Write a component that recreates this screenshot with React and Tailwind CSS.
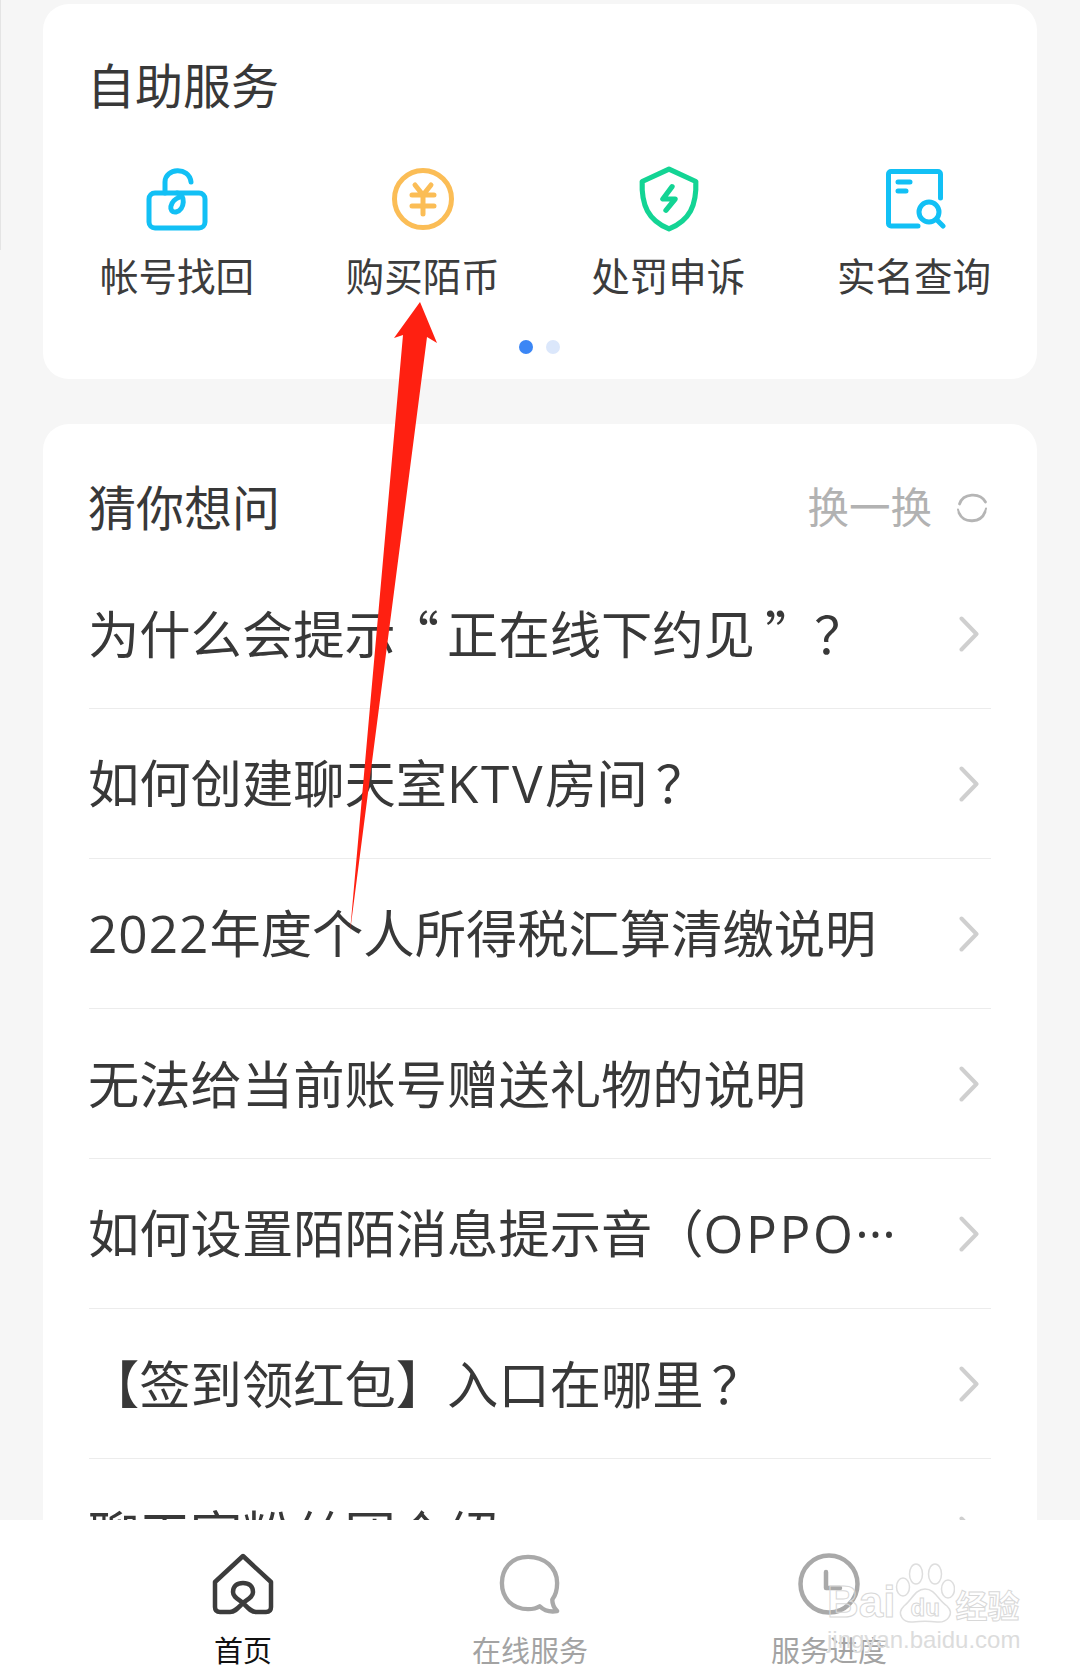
import React from 'react';

const font = { fontFamily: '"Noto Sans CJK SC", sans-serif' };

function LockIcon() {
  return (
    <svg viewBox="0 0 62 64" className="w-[62px] h-[64px]" fill="none" stroke="#12c0f5" strokeWidth="5" strokeLinecap="round" strokeLinejoin="round">
      <rect x="3" y="26" width="56" height="35" rx="6" />
      <path d="M19 26 V15 C19 1 43 -1 45 15" />
      <path d="M31 26 C40 27 39 43 30 45 C22 46 23 34 34 30" />
    </svg>
  );
}

function CoinIcon() {
  return (
    <svg viewBox="0 0 64 64" className="w-[64px] h-[64px]" fill="none" stroke="#fbbd56" strokeLinecap="round">
      <circle cx="32" cy="32" r="28.5" strokeWidth="5" />
      <path d="M24 18 L32 28 L40 18 M21 28 H43 M21 39 H43 M32 28 V47" strokeWidth="5" />
    </svg>
  );
}

function ShieldIcon() {
  return (
    <svg viewBox="0 0 60 64" className="w-[62px] h-[66px] ml-[1px]" fill="none" stroke="#13d494" strokeLinecap="round" strokeLinejoin="round">
      <path d="M30 3 L56 15 C57 38 50 53 30 61 C10 53 3 38 4 15 Z" strokeWidth="5" />
      <path d="M33 20 L24 32 H36 L27 43" strokeWidth="5" />
    </svg>
  );
}

function SearchDocIcon() {
  return (
    <svg viewBox="0 0 60 60" className="w-[60px] h-[60px] ml-[4px]" fill="none" stroke="#12c0f5" strokeLinecap="round" strokeLinejoin="round">
      <path d="M32 57 H5 A2.500 2.500 0 0 1 2.500 54.500 V5 A2.500 2.500 0 0 1 5 2.500 H52 A2.500 2.500 0 0 1 54.500 5 V29" strokeWidth="5" />
      <path d="M12 13 H24 M12 22 H20" strokeWidth="5" />
      <circle cx="43" cy="43" r="10" strokeWidth="5" />
      <path d="M51 51 L57 57" strokeWidth="5" />
    </svg>
  );
}

function Chevron() {
  return (
    <svg viewBox="0 0 20 36" className="w-[20px] h-[36px] shrink-0" fill="none" stroke="#cfcfcf" strokeWidth="4" strokeLinecap="round" strokeLinejoin="round">
      <path d="M2.500 2.500 L17.500 18 L2.500 33.500" />
    </svg>
  );
}

function RefreshIcon() {
  return (
    <svg viewBox="0 0 32 32" className="w-[32px] h-[32px] mt-[6px]" fill="none" stroke="#b5b5b5" strokeWidth="2.800" strokeLinecap="round">
      <path d="M3.500 12 C7 1 24 0 29.500 10" />
      <path d="M29 20 C25 31 8 32 3 21" />
      <path d="M3 21 L2 17.500" strokeWidth="2" />
      <path d="M29 20 L30 16.500" strokeWidth="2" />
    </svg>
  );
}

function HomeIcon() {
  return (
    <svg viewBox="0 0 64 62" className="w-[64px] h-[62px]" fill="none" stroke="#3c3c3c" strokeWidth="4.500" strokeLinejoin="round" strokeLinecap="round">
      <path d="M32 3 L60 29 V54 C60 58 58 59 55 59 H45 C40 59 37 55 32 50 C27 46 22 44 22 39 C22 33 26 30 32 30 C38 30 42 33 42 39 C42 44 37 46 32 50 C27 55 24 59 19 59 H9 C6 59 4 58 4 54 V29 Z" />
    </svg>
  );
}

function ChatIcon() {
  return (
    <svg viewBox="0 0 64 62" className="w-[62px] h-[62px]" fill="none" stroke="#a9a9a9" strokeWidth="4.500" strokeLinejoin="round" strokeLinecap="round">
      <path d="M30 3 C12 3 3 16 3 30 C3 46 14 57 30 57 C35 57 39 56 42 54 C47 59 54 60 60 59 C56 55 55 51 55 47 C59 42 60 36 60 30 C60 14 47 3 30 3 Z" />
    </svg>
  );
}

function ClockIcon() {
  return (
    <svg viewBox="0 0 62 62" className="w-[62px] h-[62px]" fill="none" stroke="#a9a9a9" strokeWidth="4.500" strokeLinecap="round" strokeLinejoin="round">
      <circle cx="31" cy="31" r="28.500" />
      <path d="M28 19 V35 H42" />
    </svg>
  );
}

function PawIcon() {
  return (
    <svg viewBox="0 0 60 62" className="w-[60px] h-[62px]" fill="#ffffff" stroke="#dedede" strokeWidth="1.500">
      <ellipse cx="21" cy="12" rx="6.500" ry="10" />
      <ellipse cx="40" cy="12" rx="6.500" ry="10" />
      <ellipse cx="8" cy="25" rx="6.500" ry="9" />
      <ellipse cx="53" cy="27" rx="6.500" ry="9" />
      <path d="M30 27 C40 27 43 38 52 44 C60 52 52 61 42 60 C35 59 25 59 18 60 C8 61 1 52 9 44 C17 38 20 27 30 27 Z" />
    </svg>
  );
}

const Latin = ({ children }) => <span className="[font-family:'Open_Sans',sans-serif] tracking-[0.05em]">{children}</span>;
const Mark = () => <span className="ml-[8px]">？</span>;

const services = [
  { label: '帐号找回', icon: <LockIcon /> },
  { label: '购买陌币', icon: <CoinIcon /> },
  { label: '处罚申诉', icon: <ShieldIcon /> },
  { label: '实名查询', icon: <SearchDocIcon /> },
];

const questions = [
  <>为什么会提示<span className="-ml-[8px] mr-[8px]">“</span>正在线下约见<span className="ml-[10px] -mr-[10px]">”</span><Mark /></>,
  <>如何创建聊天室<Latin>KTV</Latin>房间<Mark /></>,
  <><span className="[font-family:'Open_Sans',sans-serif] tracking-[0.02em]">2022</span>年度个人所得税汇算清缴说明</>,
  <>无法给当前账号赠送礼物的说明</>,
  <>如何设置陌陌消息提示音（<Latin>OPPO</Latin><span className="[font-family:'Open_Sans',sans-serif]">···</span></>,
  <>【签到领红包】入口在哪里<Mark /></>,
  <>聊天室粉丝团介绍</>,
];

export default function App() {
  return (
    <div lang="zh-CN" className="relative w-[1080px] h-[1677px] flex flex-col overflow-hidden bg-[#f6f6f6]" style={font}>
      <div className="flex-1 min-h-0 overflow-hidden px-[43px] pt-[4px]">
        {/* self service */}
        <section className="h-[375px] bg-white rounded-[26px] pt-[42px]">
          <h2 className="pl-[44px] text-[48px] leading-[74px] text-[#383838]">自助服务</h2>
          <div className="flex justify-between pl-[57px] pr-[46px] mt-[47px]">
            {services.map((s) => (
              <div key={s.label} className="flex flex-col items-center">
                <div className="h-[64px] flex items-center">{s.icon}</div>
                <div className="mt-[15px] text-[38.5px] leading-[56px] text-[#3c3c3c]">{s.label}</div>
              </div>
            ))}
          </div>
          <div className="flex justify-center gap-[13px] mt-[38px] pr-[1px]">
            <span className="w-[14px] h-[14px] rounded-full bg-[#3b86f5]" />
            <span className="w-[14px] h-[14px] rounded-full bg-[#dbe7fb]" />
          </div>
        </section>

        {/* guess questions */}
        <section className="mt-[45px] bg-white rounded-t-[26px] px-[46px] pb-[40px]">
          <div className="h-[135px] pt-[44px] flex justify-between">
            <h2 className="-ml-[1px] text-[48px] leading-[74px] text-[#383838]">猜你想问</h2>
            <div className="flex items-center gap-[24px] h-[74px] pr-[3px]">
              <span className="text-[41.5px] text-[#b2b2b2]">换一换</span>
              <RefreshIcon />
            </div>
          </div>
          {questions.map((q, i) => (
            <div key={i} className="h-[150px] flex items-center justify-between border-b border-[#ececec] pr-[12px]">
              <span className="-mt-[4px] -ml-[1px] text-[51.3px] leading-[70px] text-[#383838] whitespace-nowrap">{q}</span>
              <Chevron />
            </div>
          ))}
        </section>
      </div>

      {/* tab bar */}
      <footer className="h-[157px] shrink-0 bg-white flex pt-[33px]">
        <div className="w-[120px] ml-[183px] flex flex-col items-center">
          <HomeIcon />
          <span className="mt-[14px] text-[29px] leading-[40px] text-[#111111]">首页</span>
        </div>
        <div className="w-[120px] ml-[167px] flex flex-col items-center">
          <ChatIcon />
          <span className="mt-[14px] text-[29px] leading-[40px] text-[#a3a3a3]">在线服务</span>
        </div>
        <div className="w-[120px] ml-[179px] flex flex-col items-center">
          <ClockIcon />
          <span className="mt-[14px] text-[29px] leading-[40px] text-[#a3a3a3] whitespace-nowrap">服务进度</span>
        </div>
      </footer>

      {/* baidu watermark */}
      <div className="absolute left-[827px] top-[1560px] w-[195px]">
        <div className="flex items-end h-[64px]">
          <span className="text-[44px] leading-[44px] font-bold text-transparent [-webkit-text-stroke:1px_#d8d8d8] [font-family:'Liberation_Sans',sans-serif]">Bai</span>
          <div className="relative">
            <PawIcon />
            <span className="absolute left-[15px] top-[34px] text-[24px] leading-[24px] font-bold text-transparent [-webkit-text-stroke:1px_#d8d8d8] [font-family:'Liberation_Sans',sans-serif]">du</span>
          </div>
          <span className="text-[32px] leading-[40px] font-bold text-transparent [-webkit-text-stroke:1px_#d8d8d8]">经验</span>
        </div>
        <div className="mt-[2px] text-[24px] leading-[28px] text-[#dcdcdc] whitespace-nowrap [font-family:'Liberation_Sans',sans-serif]">jingyan.baidu.com</div>
      </div>

      {/* scan edge on the left of the screenshot */}
      <div className="absolute left-0 top-0 w-px h-[250px] bg-[#e4e4e4]" />

      {/* red annotation arrow */}
      <svg viewBox="0 0 1080 1677" className="absolute inset-0 w-[1080px] h-[1677px] pointer-events-none">
        <polygon points="420,302 437,343 427,337 350,932 403,335 394,338" fill="#ff2011" />
      </svg>
    </div>
  );
}
